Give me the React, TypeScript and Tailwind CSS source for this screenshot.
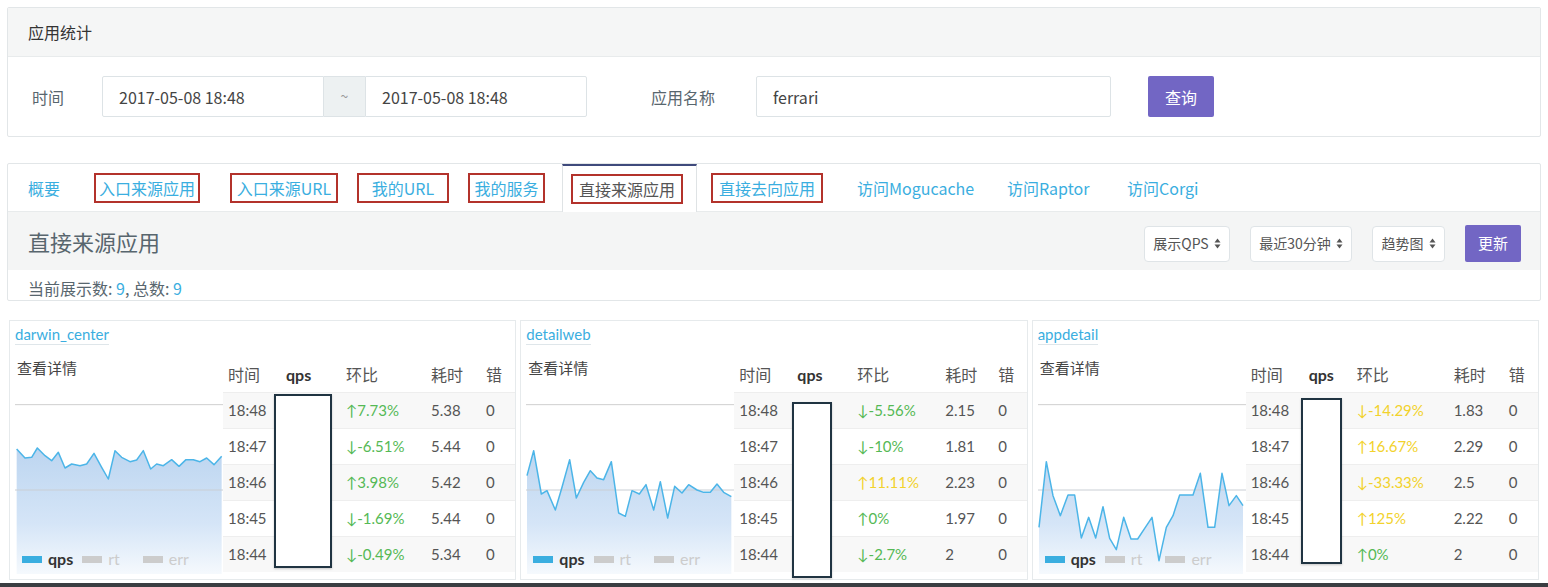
import React from 'react';

type Row = { t: string; pct: string; warn: boolean; rt: string };
type CardData = {
  name: string;
  cols: string;
  box: string;
  x0: number;
  pts: number[][];
  rows: Row[];
};

const cards: CardData[] = [
  {
    name: 'darwin_center',
    cols: 'grid-cols-[58px_60px_85px_55px_1fr]',
    box: 'left-[264px] top-[73px] w-[58px] h-[174px]',
    x0: 45,
    pts: [[50,405],[75,432],[95,430],[112,402],[135,425],[155,440],[175,415],[195,462],[215,450],[240,455],[260,450],[282,418],[305,460],[325,495],[345,410],[365,430],[390,443],[410,438],[430,410],[452,465],[470,450],[490,455],[515,437],[537,457],[558,437],[580,437],[600,443],[620,432],[642,452],[665,427]],
    rows: [
      { t: '18:48', pct: '↑7.73%', warn: false, rt: '5.38' },
      { t: '18:47', pct: '↓-6.51%', warn: false, rt: '5.44' },
      { t: '18:46', pct: '↑3.98%', warn: false, rt: '5.42' },
      { t: '18:45', pct: '↓-1.69%', warn: false, rt: '5.44' },
      { t: '18:44', pct: '↓-0.49%', warn: false, rt: '5.34' },
    ],
  },
  {
    name: 'detailweb',
    cols: 'grid-cols-[58px_60px_88px_53px_1fr]',
    box: 'left-[271px] top-[81px] w-[40px] h-[176px]',
    x0: 32,
    pts: [[35,485],[55,410],[78,540],[95,530],[120,588],[140,520],[163,437],[183,552],[205,505],[225,470],[245,492],[265,497],[288,443],[310,597],[330,607],[350,530],[372,540],[392,512],[415,588],[435,503],[457,612],[478,517],[500,537],[520,512],[545,528],[565,535],[585,535],[605,510],[625,535],[648,548]],
    rows: [
      { t: '18:48', pct: '↓-5.56%', warn: false, rt: '2.15' },
      { t: '18:47', pct: '↓-10%', warn: false, rt: '1.81' },
      { t: '18:46', pct: '↑11.11%', warn: true, rt: '2.23' },
      { t: '18:45', pct: '↑0%', warn: false, rt: '1.97' },
      { t: '18:44', pct: '↓-2.7%', warn: false, rt: '2' },
    ],
  },
  {
    name: 'appdetail',
    cols: 'grid-cols-[58px_48px_97px_55px_1fr]',
    box: 'left-[268px] top-[77px] w-[41px] h-[166px]',
    x0: 35,
    pts: [[38,640],[60,443],[80,545],[102,605],[125,543],[145,543],[165,672],[187,610],[208,672],[230,578],[250,673],[270,707],[292,610],[314,675],[334,675],[355,643],[377,610],[398,740],[420,640],[440,605],[460,543],[500,543],[522,478],[545,640],[565,640],[587,478],[608,575],[630,545],[650,575]],
    rows: [
      { t: '18:48', pct: '↓-14.29%', warn: true, rt: '1.83' },
      { t: '18:47', pct: '↑16.67%', warn: true, rt: '2.29' },
      { t: '18:46', pct: '↓-33.33%', warn: true, rt: '2.5' },
      { t: '18:45', pct: '↑125%', warn: true, rt: '2.22' },
      { t: '18:44', pct: '↑0%', warn: false, rt: '2' },
    ],
  },
];

const SortArrows = () => (
  <svg width="7" height="11" viewBox="0 0 7 11" className="ml-[5px]">
    <path d="M3.5 0.5 L6.5 4.5 L0.5 4.5 Z" fill="#555" />
    <path d="M3.5 10.5 L6.5 6.5 L0.5 6.5 Z" fill="#555" />
  </svg>
);

const Select = ({ label, w }: { label: string; w: string }) => (
  <div className={`${w} h-[36px] flex items-center justify-center bg-white border border-[#dfe4e7] rounded-[4px] text-[14px] text-[#555]`}>
    {label}
    <SortArrows />
  </div>
);

const Chart = ({ c, id }: { c: CardData; id: string }) => {
  const line = c.pts.map((p) => p.join(',')).join(' ');
  const first = c.pts[0];
  const last = c.pts[c.pts.length - 1];
  const area = `${line} ${last[0]},780 ${first[0]},780`;
  return (
    <div className="relative mt-[15px] h-[180px] w-[208px]">
      <svg width="208" height="180" viewBox={`${c.x0} 240 624 540`} preserveAspectRatio="none" className="block">
        <defs>
          <linearGradient id={id} x1="0" y1="400" x2="0" y2="780" gradientUnits="userSpaceOnUse">
            <stop offset="0" stopColor="#bcd5f0" />
            <stop offset="0.6" stopColor="#d5e5f7" />
            <stop offset="1" stopColor="#f5f9fd" />
          </linearGradient>
        </defs>
        <line x1={c.x0} y1="272" x2={c.x0 + 624} y2="272" stroke="#cfcfcf" strokeWidth="1" vectorEffect="non-scaling-stroke" />
        <polygon points={area} fill={`url(#${id})`} />
        <line x1={c.x0} y1="528" x2={c.x0 + 624} y2="528" stroke="#c9ced4" strokeWidth="1" vectorEffect="non-scaling-stroke" />
        <polyline points={line} fill="none" stroke="#4cb5e8" strokeWidth="1.5" vectorEffect="non-scaling-stroke" strokeLinejoin="round" />
      </svg>
      <div className="absolute left-[7px] top-[155px] h-[20px] flex items-center text-[16px] font-['Lato','Noto_Sans_CJK_SC',sans-serif]">
        <span className="w-[20px] h-[7px] bg-[#3aaee0]" />
        <span className="ml-[6px] font-bold text-[#333]">qps</span>
        <span className="ml-[9px] w-[20px] h-[7px] bg-[#cccccc]" />
        <span className="ml-[6px] text-[#cccccc]">rt</span>
        <span className="ml-[23px] w-[20px] h-[7px] bg-[#cccccc]" />
        <span className="ml-[6px] text-[#cccccc]">err</span>
      </div>
    </div>
  );
};

const Card = ({ c, i }: { c: CardData; i: number }) => (
  <div className="relative h-[260px] border border-[#e6eaec] pl-[5px] pt-[3px] font-['Lato','Noto_Sans_CJK_SC',sans-serif] text-[#555]">
    <div className="w-fit text-[15px] leading-[20px] text-[#3aaee0] border-b border-[#dfe6ea]">{c.name}</div>
    <div className="flex mt-[12px]">
      <div className="w-[208px]">
        <div className="pl-[2px] text-[15px] leading-[22px] text-[#444]">查看详情</div>
        <Chart c={c} id={`grad${i}`} />
      </div>
      <div className="flex-1">
        <div className={`grid ${c.cols} h-[35px] items-center text-[16px]`}>
          <span className="pl-[5px]">时间</span>
          <span className="pl-[5px] font-bold text-[#333]">qps</span>
          <span className="pl-[5px]">环比</span>
          <span className="pl-[5px]">耗时</span>
          <span className="pl-[5px]">错</span>
        </div>
        {c.rows.map((r, k) => (
          <div
            key={r.t}
            className={`grid ${c.cols} h-[36px] items-center text-[15px] border-t border-[#eeeeee] ${k % 2 === 0 ? 'bg-[#f8f8f8]' : 'bg-white'}`}
          >
            <span className="pl-[5px]">{r.t}</span>
            <span className="pl-[5px]" />
            <span className={`pl-[5px] ${r.warn ? 'text-[#f2d22c]' : 'text-[#55b955]'}`}>{r.pct}</span>
            <span className="pl-[5px]">{r.rt}</span>
            <span className="pl-[5px]">0</span>
          </div>
        ))}
      </div>
    </div>
    <div className={`absolute ${c.box} bg-white border-2 border-[#203442] shadow-[0_1px_2px_rgba(0,0,0,0.2)]`} />
  </div>
);

const Boxed = ({ text, w, ml, dark }: { text: string; w: string; ml: string; dark?: boolean }) => (
  <div className={`${ml} ${w} self-center h-[30px] border-2 border-[#b3322b] flex items-center justify-center ${dark ? 'text-[#555]' : ''}`}>
    {text}
  </div>
);

export default function App() {
  return (
    <div className="w-[1548px] h-[587px] bg-white overflow-hidden font-['Noto_Sans_CJK_SC',sans-serif] text-[#58666e]">
      <div className="px-[7px] pt-[7px]">
        <div className="border border-[#e2e6e8] rounded-[2px]">
          <div className="h-[49px] bg-[#f5f6f6] border-b border-[#e8ebec] flex items-center pl-[20px] text-[16px] text-[#333]">
            应用统计
          </div>
          <div className="h-[79px] flex items-center text-[16px]">
            <span className="ml-[24px] w-[70px]">时间</span>
            <div className="flex h-[41px] text-[#444]">
              <div className="w-[222px] border border-[#dde3e6] rounded-l-[2px] flex items-center pl-[16px]">2017-05-08 18:48</div>
              <div className="w-[41px] border-y border-[#dde3e6] bg-[#edf1f2] flex items-center justify-center text-[#999] text-[14px]">~</div>
              <div className="w-[222px] border border-[#dde3e6] rounded-r-[2px] flex items-center pl-[16px]">2017-05-08 18:48</div>
            </div>
            <span className="ml-[64px] w-[105px]">应用名称</span>
            <div className="w-[355px] h-[41px] border border-[#dde3e6] rounded-[2px] flex items-center pl-[16px] text-[#444]">ferrari</div>
            <button className="ml-[37px] w-[66px] h-[41px] rounded-[2px] bg-[#7266c4] text-white text-[16px]">查询</button>
          </div>
        </div>

        <div className="mt-[26px] border border-[#e2e6e8] rounded-[2px]">
          <div className="h-[48px] flex border-b border-[#e8ebec] text-[16px] text-[#3aaee0]">
            <div className="ml-[20px] w-[66px] flex items-center">概要</div>
            <Boxed text="入口来源应用" ml="ml-0" w="w-[106px]" />
            <Boxed text="入口来源URL" ml="ml-[30px]" w="w-[108px]" />
            <Boxed text="我的URL" ml="ml-[19px]" w="w-[92px]" />
            <Boxed text="我的服务" ml="ml-[19px]" w="w-[77px]" />
            <div className="ml-[17px] w-[135px] -mb-px bg-white border-t-2 border-t-[#3f4a7c] border-x border-x-[#dfe3e5] flex items-center">
              <Boxed text="直接来源应用" ml="ml-[8px]" w="w-[112px]" dark />
            </div>
            <Boxed text="直接去向应用" ml="ml-[14px]" w="w-[112px]" />
            <div className="ml-[34px] w-[150px] flex items-center">访问Mogucache</div>
            <div className="w-[120px] flex items-center">访问Raptor</div>
            <div className="flex items-center">访问Corgi</div>
          </div>
          <div className="h-[58px] bg-[#f4f5f5] flex items-center pl-[20px] pr-[19px]">
            <span className="text-[22px] text-[#58666e]">直接来源应用</span>
            <div className="ml-auto mt-[5px] flex items-center gap-[20px]">
              <Select label="展示QPS" w="w-[86px]" />
              <Select label="最近30分钟" w="w-[102px]" />
              <Select label="趋势图" w="w-[73px]" />
              <button className="w-[56px] h-[37px] rounded-[2px] bg-[#7266c4] text-white text-[15px]">更新</button>
            </div>
          </div>
          <div className="h-[30px] flex items-center pl-[20px] pt-[5px] text-[16px] text-[#58666e]">
            当前展示数:&nbsp;<span className="text-[#3aaee0]">9</span>,&nbsp;总数:&nbsp;<span className="text-[#3aaee0]">9</span>
          </div>
        </div>

        <div className="mt-[19px] px-[2px] grid grid-cols-3 gap-[4px]">
          {cards.map((c, i) => (
            <Card key={c.name} c={c} i={i} />
          ))}
        </div>
      </div>
      <div className="mt-[3px] h-[4px] bg-[#3a3d41]" />
    </div>
  );
}
